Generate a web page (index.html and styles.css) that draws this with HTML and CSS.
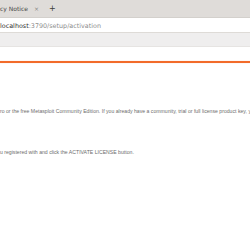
FILE: index.html
```html
<!DOCTYPE html>
<html>
<head>
<meta charset="utf-8">
<link rel="stylesheet" href="styles.css">
</head>
<body>
<div class="tabbar">
  <span class="tab-title">cy Notice</span>
  <span class="tab-close">×</span>
  <span class="tab-new">+</span>
</div>
<div class="urlbar">
  <span class="host">localhost</span><span class="path">:3790/setup/activation</span>
</div>
<div class="bookmarks"></div>
<div class="page">
  <div class="rule"></div>
  <p class="line first">ro or the free Metasploit Community Edition. If you already have a community, trial or full license product key, you</p>
  <p class="line second">u registered with and click the ACTIVATE LICENSE button.</p>
</div>
</body>
</html>
```
FILE: styles.css
```css
html, body {
  margin: 0;
  padding: 0;
  background: #ffffff;
  width: 250px;
  height: 250px;
  overflow: hidden;
  font-family: "DejaVu Sans", "Liberation Sans", sans-serif;
}
.tabbar {
  height: 17px;
  background: #dfdcd9;
  border-bottom: 1px solid #d3d0cc;
  display: flex;
  align-items: center;
  color: #4a4a48;
  font-size: 6px;
}
.tab-title {
  margin-left: 0;
  width: 34px;
}
.tab-close {
  font-size: 6px;
  color: #8a8886;
  width: 15px;
}
.tab-new {
  font-size: 8px;
  color: #3c3c3a;
}
.urlbar {
  height: 13px;
  margin-top: 1px;
  background: #ffffff;
  border-bottom: 1px solid #dedbd7;
  display: flex;
  align-items: center;
  font-size: 6.4px;
}
.host {
  color: #2e2e2e;
}
.path {
  color: #8c8c8c;
}
.bookmarks {
  height: 13px;
  background: #efeeee;
  border-bottom: 1px solid #e6e4e2;
}
.page {
  padding-top: 14px;
}
.rule {
  height: 2px;
  background: #f26b2a;
  box-shadow: 0 0 1px #f8b894;
}
.line {
  margin: 0;
  white-space: nowrap;
  overflow: hidden;
  font-family: "Liberation Sans", sans-serif;
  font-size: 5.15px;
  color: #6d6d6d;
}
.first {
  margin-top: 45px;
}
.second {
  margin-top: 35px;
}
```
